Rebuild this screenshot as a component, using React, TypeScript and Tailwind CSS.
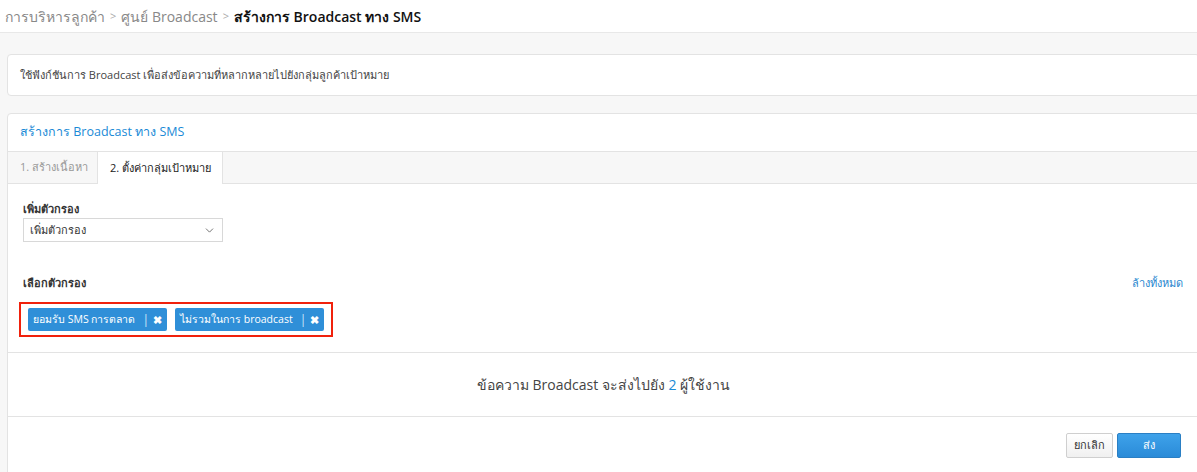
import { ChevronDown } from 'lucide-react';

const font = { fontFamily: '"Open Sans", "Noto Sans", "Liberation Sans", sans-serif' };

function Tag({ label }: { label: string }) {
    return (
        <span className="flex items-center h-[23px] bg-[#2f8fd8] text-white rounded-[2px] pl-[5px] pr-[5px] text-[10.5px]">
            <span>{label}</span>
            <span className="ml-[7px] mr-[4px] text-[#cfe6f8] text-[12px]">|</span>
            <span className="font-bold text-[11px] leading-none">✖</span>
        </span>
    );
}

export default function App() {
    return (
        <div className="w-[1197px] h-[472px] overflow-hidden bg-[#f7f7f7] text-[#333]" style={font}>
            <div className="h-[33px] bg-white border-b border-[#e8e8e8] flex items-center px-[5px] text-[14px] text-[#888] gap-[5px]">
                <span>การบริหารลูกค้า</span>
                <span className="text-[11px] text-[#aaa]">&gt;</span>
                <span>ศูนย์ Broadcast</span>
                <span className="text-[11px] text-[#aaa]">&gt;</span>
                <span className="text-[#111] font-semibold">สร้างการ Broadcast ทาง SMS</span>
            </div>

            <div className="pl-[7px] w-[1200px]">
                <div className="mt-[21px] h-[42px] bg-white border border-[#e3e3e3] rounded-[4px] flex items-center px-[12px] text-[11px] text-[#444]">
                    ใช้ฟังก์ชันการ Broadcast เพื่อส่งข้อความที่หลากหลายไปยังกลุ่มลูกค้าเป้าหมาย
                </div>

                <div className="mt-[17px] bg-white border border-[#e3e3e3] rounded-t-[4px]">
                    <div className="h-[37px] flex items-center px-[12px] text-[12.5px] text-[#1a8ad6]">
                        สร้างการ Broadcast ทาง SMS
                    </div>
                    <div className="h-[33px] flex bg-[#f7f7f7] border-y border-[#e3e3e3] text-[11px]">
                        <div className="w-[89px] flex items-center pl-[12px] text-[#999]">1. สร้างเนื้อหา</div>
                        <div className="w-[126px] flex items-center pl-[12px] bg-white border-x border-[#e3e3e3] text-[#222] -mb-px">
                            2. ตั้งค่ากลุ่มเป้าหมาย
                        </div>
                    </div>

                    <div className="px-[15px] pt-[17px]">
                        <div className="text-[11px] font-semibold text-[#333] leading-[16px]">เพิ่มตัวกรอง</div>
                        <div className="mt-[1px] w-[200px] h-[24px] border border-[#d8d8d8] flex items-center justify-between px-[6px] text-[11px] text-[#333]">
                            <span>เพิ่มตัวกรอง</span>
                            <ChevronDown size={13} strokeWidth={1.5} className="text-[#555]" />
                        </div>

                        <div className="mt-[33px] flex justify-between items-center text-[11px] leading-[16px]">
                            <span className="font-semibold text-[#333]">เลือกตัวกรอง</span>
                            <span className="text-[#2a87cf] mr-[1px]">ล้างทั้งหมด</span>
                        </div>

                        <div className="mt-[11px] inline-flex gap-[8px] border-2 border-[#f0210c] px-[7px] py-[4px] -ml-[4px]">
                            <Tag label="ยอมรับ SMS การตลาด" />
                            <Tag label="ไม่รวมในการ broadcast" />
                        </div>
                    </div>

                    <div className="mt-[15px] h-[65px] border-y border-[#e3e3e3] flex items-center justify-center text-[14px] text-[#444]">
                        <span>
                            ข้อความ Broadcast จะส่งไปยัง <span className="text-[#1a8ad6]">2</span> ผู้ใช้งาน
                        </span>
                    </div>

                    <div className="h-[60px] flex justify-end items-start pt-[16px] pr-[18px] gap-[4px]">
                        <button className="h-[25px] px-[7px] border border-[#cfcfcf] rounded-[2px] bg-gradient-to-b from-white to-[#f0f0f0] text-[11px] text-[#333]">
                            ยกเลิก
                        </button>
                        <button className="h-[25px] w-[64px] rounded-[2px] border border-[#2a7fc4] bg-gradient-to-b from-[#3ea2ea] to-[#2a8bd8] text-[11px] text-white">
                            ส่ง
                        </button>
                    </div>
                </div>
            </div>
        </div>
    );
}
